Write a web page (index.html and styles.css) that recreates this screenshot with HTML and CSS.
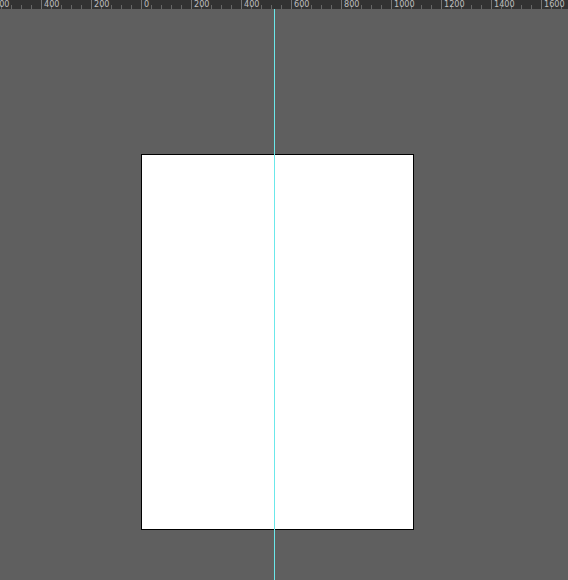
FILE: index.html
```
<!DOCTYPE html>
<html lang="en">
<head>
    <meta charset="UTF-8">
    <meta name="viewport" content="width=device-width, initial-scale=1.0">
    <title>Artboard</title>
    <link rel="stylesheet" href="styles.css">
</head>
<body>
    <div class="ruler">
        <span class="mark">600</span>
        <span class="mark">400</span>
        <span class="mark">200</span>
        <span class="mark">0</span>
        <span class="mark">200</span>
        <span class="mark">400</span>
        <span class="mark">600</span>
        <span class="mark">800</span>
        <span class="mark">1000</span>
        <span class="mark">1200</span>
        <span class="mark">1400</span>
        <span class="mark">1600</span>
    </div>
    <main class="canvas">
        <div class="artboard"></div>
        <div class="guide"></div>
    </main>
</body>
</html>
```

FILE: styles.css
```
body{
    margin: 0;
    min-height: 100vh;
    display: flex;
    flex-direction: column;
    overflow: hidden;
    background-color: #5f5f5f;
    font-family: "DejaVu Sans Condensed", "Noto Sans", sans-serif;
}

.ruler{
    display: flex;
    height: 9px;
    /* the first mark starts left of the window */
    margin-left: -9px;
    background-color: #323232;
}

.mark{
    box-sizing: border-box;
    flex: 0 0 50px;
    height: 9px;
    padding-left: 3px;
    color: #bebebe;
    font-size: 9px;
    line-height: 9px;
    /* full height tick, then a short one every 10px */
    background-image:
        linear-gradient(#747474, #747474),
        repeating-linear-gradient(to right, #666666 0, #666666 1px, transparent 1px, transparent 10px);
    background-size: 1px 9px, 50px 4px;
    background-position: left top, left bottom;
    background-repeat: no-repeat;
}

.canvas{
    flex: 1;
    position: relative;
    padding: 145px 0 50px 141px;
}

.artboard{
    box-sizing: border-box;
    width: 273px;
    height: 376px;
    border: 1px solid #000000;
    background-color: #ffffff;
}

/* vertical guide, drawn over the artboard */
.guide{
    position: absolute;
    top: 0;
    bottom: 0;
    left: 274px;
    width: 1px;
    background-color: #6be8ea;
}
```
